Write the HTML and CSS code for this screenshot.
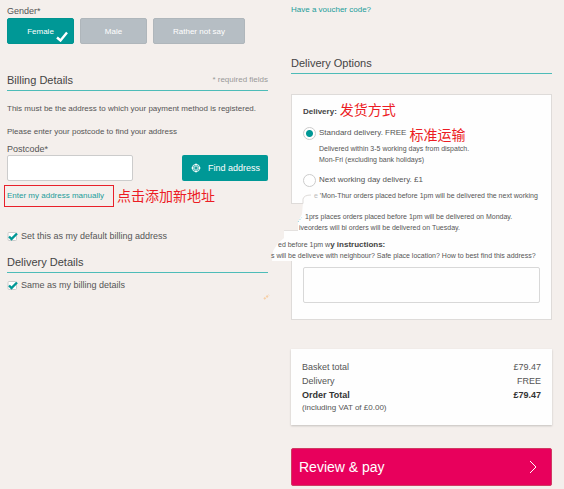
FILE: index.html
```html
<!DOCTYPE html>
<html lang="en">
<head>
    <meta charset="utf-8">
    <title>Checkout</title>
    <link rel="stylesheet" href="styles.css">
</head>
<body>
    <div class="checkout">
        <div class="column">
            <div class="label" id="genderLabel">Gender*</div>
            <div class="genders" role="group" aria-labelledby="genderLabel">
                <button class="gender selected" type="button">Female
                    <svg class="gender-tick" viewBox="0 0 12 11"><path d="M1 6.5 L4.5 9.5 L11 1.5" fill="none" stroke="#fff" stroke-width="2.4"/></svg>
                </button>
                <button class="gender" type="button">Male</button>
                <button class="gender" type="button">Rather not say</button>
            </div>

            <div class="heading billing">
                <h2>Billing Details</h2>
                <span class="required">* required fields</span>
            </div>
            <p class="intro">This must be the address to which your payment method is registered.</p>
            <p class="hint">Please enter your postcode to find your address</p>

            <label class="label postcode-label" for="postcode">Postcode*</label>
            <div class="postcode-row">
                <input class="postcode" id="postcode" type="text">
                <button class="find" type="button">
                    <svg class="find-icon" viewBox="0 0 10 10" fill="none" stroke="#fff"><circle cx="5" cy="5" r="3.6" stroke-width="1"/><path d="M5 0.5v3.5M5 6v3.5M0.5 5h3.5M6 5h3.5" stroke-width="1"/><path d="M3 3l1.2 1.2M7 3l-1.2 1.2M3 7l1.2 -1.2M7 7l-1.2 -1.2" stroke-width="0.6"/></svg>
                    Find address
                </button>
            </div>

            <div class="manual-row">
                <a class="manual" href="#">Enter my address manually</a>
                <span class="note" lang="zh">点击添加新地址</span>
            </div>

            <label class="check default-address"><input type="checkbox" checked>Set this as my default billing address</label>

            <div class="heading delivery">
                <h2>Delivery Details</h2>
            </div>
            <label class="check same-address"><input type="checkbox" checked>Same as my billing details</label>
        </div>

        <div class="column">
            <a class="voucher" href="#">Have a voucher code?</a>

            <div class="heading options">
                <h2>Delivery Options</h2>
            </div>

            <div class="panel">
                <svg class="tear" viewBox="0 0 36 70">
                    <path d="M19 8 H32 L31 19 L27 27 V35 H19 Z" fill="#f4efec"/>
                    <path d="M20 8.5 H32 V4 Q33 0 40 0" fill="none" stroke="#dedbd9"/>
                    <path d="M13 35 H36 V66 H1 L2 56 L7 48 L13 43 Z" fill="#fefefe"/>
                    <path d="M13 35.5 H27" stroke="#e4e1df"/>
                    <path d="M27 27 L31 22" stroke="#7fd0e0" stroke-dasharray="1 2"/>
                    <path d="M-7 104 L-2 100" stroke="#f6cfa6" stroke-width="2" stroke-dasharray="2 1"/>
                </svg>
                <div class="panel-title">
                    <strong>Delivery:</strong>
                    <span class="note" lang="zh">发货方式</span>
                </div>
                <label class="radio"><input type="radio" name="delivery" checked>Standard delivery. FREE
                    <span class="note standard-note" lang="zh">标准运输</span>
                </label>
                <p class="small detail">Delivered within 3-5 working days from dispatch.<br>Mon-Fri (excluding bank holidays)</p>

                <label class="radio"><input type="radio" name="delivery">Next working day delivery. £1</label>
                <p class="small next-day"><span class="faint">e</span> 'Mon-Thur orders placed before 1pm will be delivered the next working</p>
                <p class="small monday">1prs places orders placed before 1pm will be delivered on Monday.</p>
                <p class="small tuesday">iveorders will bi orders will be delivered on Tuesday.</p>

                <label class="instructions" for="instructions">
                    <span class="small before">ed before 1pm w<strong>y instructions:</strong></span>
                    <span class="small where">s will be deliveve with neighbour? Safe place location? How to best find this address?</span>
                </label>
                <textarea class="message" id="instructions"></textarea>
            </div>

            <div class="totals">
                <div class="total"><span>Basket total</span><span>£79.47</span></div>
                <div class="total"><span>Delivery</span><span>FREE</span></div>
                <div class="total order-total"><span>Order Total</span><span>£79.47</span></div>
                <div class="vat">(including VAT of £0.00)</div>
            </div>

            <button class="pay" type="button">Review &amp; pay
                <svg class="arrow" viewBox="0 0 8 14"><path d="M1 1 L7 7 L1 13" fill="none" stroke="#fff"/></svg>
            </button>
        </div>
    </div>
</body>
</html>
```
FILE: styles.css
```css
* {
    box-sizing: border-box;
}

body {
    margin: 0;
    background: #f4efec;
    color: #555;
    font: 8px/12px "Liberation Sans", Arial, "Noto Sans CJK SC", sans-serif;
}

p, h2 {
    margin: 0;
}

button, input, textarea {
    font-family: inherit;
}

a {
    color: #229c9a;
    text-decoration: none;
}

.checkout {
    display: grid;
    grid-template-columns: 1fr 1fr;
    gap: 23px;
    padding: 4px 12px 2px 7px;
}

.column {
    min-width: 0;
}

.label {
    display: block;
    font-size: 9px;
    line-height: 14px;
}

.genders {
    display: flex;
    gap: 6px;
}

.gender {
    position: relative;
    height: 26px;
    min-width: 67px;
    padding: 0 19px;
    border: 1px solid #afb6bb;
    border-radius: 2px;
    background: #b6bec4;
    color: white;
    font-size: 8px;
    white-space: nowrap;
}

.gender.selected {
    padding: 0 18px;
    border-color: #009490;
    background: #009896;
}

.gender-tick {
    position: absolute;
    right: 5px;
    bottom: 1px;
    width: 12px;
    height: 11px;
}

.heading {
    display: flex;
    justify-content: space-between;
    border-bottom: 1px solid #4dbcb8;
    line-height: 20px;
}

.heading h2 {
    font-size: 11px;
    font-weight: normal;
    color: #444;
}

.billing {
    margin-top: 26px;
}

.delivery {
    margin-top: 9px;
}

.options {
    margin-top: 37px;
}

.required {
    color: #999;
}

.intro {
    margin-top: 12px;
}

.hint {
    margin-top: 11px;
}

.postcode-label {
    margin-top: 5px;
    line-height: 12px;
}

.postcode-row {
    display: flex;
    justify-content: space-between;
}

.postcode {
    width: 126px;
    height: 26px;
    border: 1px solid #ccc;
    border-radius: 2px;
    background: white;
}

.find {
    display: flex;
    align-items: center;
    gap: 7px;
    height: 26px;
    padding: 0 8px 0 9px;
    border: none;
    border-radius: 2px;
    background: #009896;
    color: white;
    font-size: 9px;
}

.find-icon {
    width: 10px;
    height: 10px;
}

.manual-row {
    display: flex;
    align-items: center;
    gap: 3px;
    margin: 4px 0 0 -3px;
}

.manual {
    padding: 4px 9px 4px 2px;
    border: 1px solid #e8202a;
}

.note {
    color: #ec1c24;
    font-size: 14px;
    line-height: 20px;
    white-space: nowrap;
}

.check {
    display: flex;
    align-items: center;
    gap: 3px;
    font-size: 9px;
    line-height: 14px;
}

.default-address {
    margin-top: 22px;
}

.same-address {
    margin-top: 5px;
}

.check input {
    appearance: none;
    width: 11px;
    height: 9px;
    margin: 0;
    background: url("data:image/svg+xml,%3Csvg xmlns='http://www.w3.org/2000/svg' viewBox='0 0 11 9'%3E%3Crect x='1' y='.5' width='8.5' height='8' rx='1' fill='white' stroke='%23ccc'/%3E%3Cpath d='M2 4.5 L4.5 7 L10 1.5' fill='none' stroke='%23009896' stroke-width='2.4'/%3E%3C/svg%3E");
}

.voucher {
    display: block;
}

.panel {
    position: relative;
    margin-top: 20px;
    padding: 11px 11px 16px;
    border: 1px solid #dedbd9;
    background: #fefefe;
}

/* torn edge over the panel's left side */
.tear {
    position: absolute;
    left: -21px;
    top: 100px;
    width: 36px;
    height: 70px;
    overflow: visible;
}

.panel-title {
    display: flex;
    align-items: center;
    gap: 3px;
    height: 12px;
    color: #444;
}

.panel-title .note {
    padding-bottom: 4px;
}

.radio {
    display: flex;
    align-items: center;
    gap: 3px;
    height: 14px;
    margin-top: 8px;
}

.radio input {
    appearance: none;
    width: 13px;
    height: 13px;
    margin: 0;
    border: 1px solid #ccc;
    border-radius: 50%;
    background: white;
}

.radio input:checked {
    background: radial-gradient(circle, #009896 3px, white 4px);
}

.standard-note {
    padding-top: 4px;
}

.small {
    position: relative;
    font-size: 7px;
    line-height: 11px;
    white-space: nowrap;
}

.detail {
    margin: 3px 0 0 16px;
}

.next-day {
    margin: 3px 0 0 11px;
}

.faint {
    color: #bbb;
}

.monday {
    margin: 10px 0 0 2px;
}

.tuesday {
    margin-left: -4px;
}

.instructions {
    display: block;
    margin-top: 6px;
}

.instructions .small {
    display: block;
}

.before {
    margin-left: -25px;
}

.before strong {
    color: #444;
    font-size: 8px;
}

.where {
    margin-left: -32px;
}

.message {
    display: block;
    width: 100%;
    height: 36px;
    margin-top: 6px;
    border: 1px solid #d8d8d8;
    border-radius: 2px;
    background: #fefefe;
    resize: none;
}

.totals {
    margin-top: 29px;
    padding: 11px;
    background: #fefefe;
    box-shadow: 0 1px 2px rgba(0,0,0,0.2);
}

.total {
    display: flex;
    justify-content: space-between;
    font-size: 9px;
    line-height: 14px;
}

.order-total {
    color: #333;
    font-weight: bold;
}

.pay {
    display: flex;
    justify-content: space-between;
    align-items: center;
    width: 100%;
    height: 38px;
    margin-top: 23px;
    padding: 0 14px 0 7px;
    border: 1px solid #cf3b62;
    border-radius: 2px;
    background: #e8005c;
    color: white;
    font-size: 14px;
}

.arrow {
    width: 8px;
    height: 14px;
}
```
